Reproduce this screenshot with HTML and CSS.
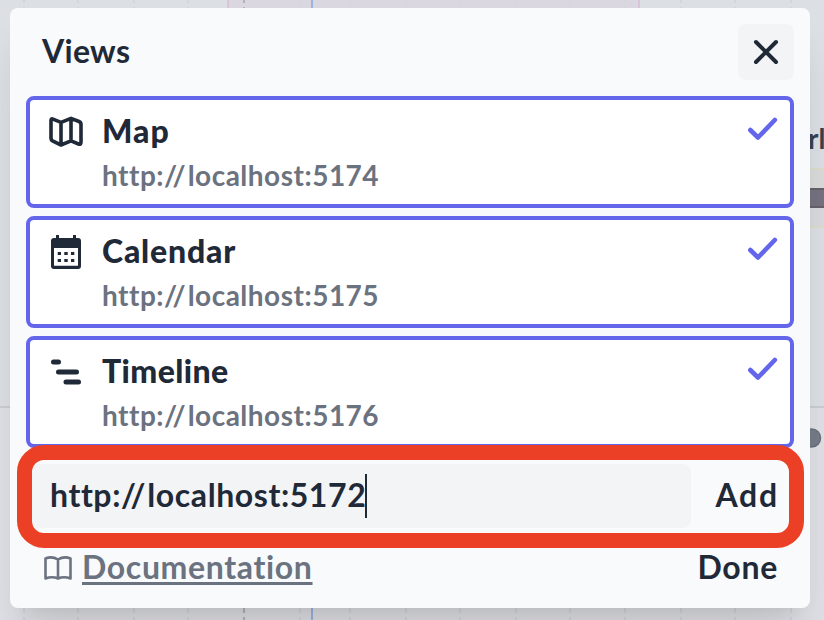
FILE: index.html
```html
<!DOCTYPE html>
<html lang="en">
<head>
<meta charset="utf-8">
<title>Views</title>
<link rel="stylesheet" href="styles.css">
</head>
<body>
<svg class="backdrop" width="824" height="620" viewBox="0 0 824 620" aria-hidden="true">
  <rect width="824" height="407" fill="#dce0e5"/>
  <rect y="407" width="824" height="213" fill="#e0e1e6"/>
  <rect x="228" width="412" height="300" fill="#dad7e1"/>
  <path d="M24 0V620M78 0V620M134 0V620M188 0V620M300 0V620M350 0V620M406 0V620M460 0V620M516 0V620M570 0V620M625 0V620M681 0V620M735 0V620M791 0V620" stroke="#d5d6dc" stroke-width="2" stroke-dasharray="6 4" stroke-dashoffset="3"/>
  <path d="M228 0V300M639 0V300" stroke="#d8c5d7" stroke-width="2"/>
  <path d="M244 0V620" stroke="#b3b3bc" stroke-width="2" stroke-dasharray="6 4" stroke-dashoffset="3"/>
  <path d="M312 0V620" stroke="#9bb5e0" stroke-width="2"/>
  <path d="M0 407H824" stroke="#cbcdd4" stroke-width="2"/>
  <rect x="790" y="169" width="40" height="58" fill="#dadcdb" stroke="#dedccb" stroke-width="2"/>
  <rect x="790" y="208" width="40" height="18" fill="#d9dbdf"/>
  <rect x="790" y="189" width="40" height="18" fill="#75737f" stroke="#686069" stroke-width="2"/>
  <circle cx="811.500" cy="438" r="9" fill="#777d88" stroke="#69707b" stroke-width="1.500"/>
</svg>
<span class="backdrop-label">rl</span>

<main class="dialog">
  <header class="dialog-header">
    <h1 class="title">Views</h1>
    <button class="close" aria-label="Close">
      <svg width="28" height="28" viewBox="0 0 28 28"><path d="M4 4L24 24M24 4L4 24" fill="none" stroke="currentColor" stroke-width="4" stroke-linecap="round"/></svg>
    </button>
  </header>

  <ul class="views">
    <li class="view">
      <svg class="view-icon" width="36" height="36" viewBox="0 0 36 36" fill="none" stroke="currentColor" stroke-width="3.600" stroke-linejoin="round"><path d="M3 6.500Q3 4.300 5 5.100L13 8.300L23 4.300L31 7.500Q33 8.300 33 10.500V28Q33 31 30.500 30L23 26.800L13 31L5 27.200Q3 26.300 3 24ZM13 8.300V31M23 4.300V26.800"/></svg>
      <div class="view-text"><strong class="view-name name-map">Map</strong><span class="view-url">http:<span class="slashes">//</span>localhost:5174</span></div>
      <svg class="check" width="32" height="32" viewBox="0 0 32 32"><path d="M4.300 17L12 24.500L28.800 7" fill="none" stroke="currentColor" stroke-width="4.600" stroke-linecap="round" stroke-linejoin="round"/></svg>
    </li>
    <li class="view">
      <svg class="view-icon" width="36" height="36" viewBox="0 0 36 36" fill="currentColor"><path fill-rule="evenodd" d="M8 1H11V4H25V1H28V4H30Q33 4 33 7V32Q33 35 30 35H6Q3 35 3 32V7Q3 4 6 4H8ZM6 14V31.700H30V14Z"/><path d="M9.700 18h3.300v3h-3.300zM16.300 18h3.400v3h-3.400zM23 18h3.300v3h-3.300zM9.700 25h3.300v3h-3.300zM16.300 25h3.400v3h-3.400zM23 25h3.300v3h-3.300z"/></svg>
      <div class="view-text"><strong class="view-name name-calendar">Calendar</strong><span class="view-url">http:<span class="slashes">//</span>localhost:5175</span></div>
      <svg class="check" width="32" height="32" viewBox="0 0 32 32"><path d="M4.300 17L12 24.500L28.800 7" fill="none" stroke="currentColor" stroke-width="4.600" stroke-linecap="round" stroke-linejoin="round"/></svg>
    </li>
    <li class="view">
      <svg class="view-icon" width="36" height="36" viewBox="0 0 36 36"><path d="M5.500 8H10.500M10.500 18H28.500M18 28H30.500" fill="none" stroke="currentColor" stroke-width="5" stroke-linecap="round"/></svg>
      <div class="view-text"><strong class="view-name name-timeline">Timeline</strong><span class="view-url">http:<span class="slashes">//</span>localhost:5176</span></div>
      <svg class="check" width="32" height="32" viewBox="0 0 32 32"><path d="M4.300 17L12 24.500L28.800 7" fill="none" stroke="currentColor" stroke-width="4.600" stroke-linecap="round" stroke-linejoin="round"/></svg>
    </li>
  </ul>

  <div class="add-row">
    <div class="url-field"><span class="url-value">http:<span class="slashes">//</span>localhost:5172</span><span class="caret"></span></div>
    <button class="text-button add">Add</button>
    <div class="highlight"></div>
  </div>

  <footer class="dialog-footer">
    <svg class="book" width="28" height="28" viewBox="0 0 28 28" fill="none" stroke="currentColor" stroke-width="2.600" stroke-linejoin="round" stroke-linecap="round"><path d="M14 5.500Q8 1.800 1.500 4.500V24.500Q8 22 14 24.500Q20 22 26.500 24.500V4.500Q20 1.800 14 5.500V24.500"/></svg>
    <a class="docs">Documentation</a>
    <button class="text-button done">Done</button>
  </footer>
</main>
</body>
</html>
```
FILE: styles.css
```css
* { box-sizing: border-box; }
body {
  margin: 0;
  width: 824px;
  height: 620px;
  overflow: hidden;
  position: relative;
  padding: 8px 14px 12px 10px;
  background: #dce0e5;
  color: #1f2937;
  font-family: Lato, "Liberation Sans", sans-serif;
  font-size: 32px;
  font-weight: 700;
  font-variant-ligatures: none;
}
button {
  font: inherit;
  color: inherit;
  border: 0;
  padding: 0;
  background: none;
}
.backdrop { position: absolute; left: 0; top: 0; }
.backdrop-label {
  position: absolute;
  left: 808px;
  top: 121px;
  font-size: 28px;
  line-height: 34px;
  color: #374151;
}
.dialog {
  position: relative;
  width: 800px;
  height: 600px;
  padding: 16px;
  border-radius: 8px;
  background: #f9fafc;
  box-shadow: 0 40px 50px -10px rgba(0, 0, 0, .1), 0 16px 20px -12px rgba(0, 0, 0, .1);
}
.dialog-header {
  display: flex;
  align-items: center;
  justify-content: space-between;
  height: 56px;
  padding-left: 16px;
}
.title { margin: 0; font-size: 32px; font-weight: 700; line-height: 40px; padding-bottom: 2px; letter-spacing: .3px; }
.close {
  display: grid;
  place-items: center;
  width: 56px;
  height: 56px;
  border-radius: 8px;
  background: #f3f4f6;
}
.views {
  display: flex;
  flex-direction: column;
  gap: 8px;
  margin: 16px 0 0;
  padding: 0;
  list-style: none;
}
.view {
  display: flex;
  height: 112px;
  padding: 12px 12px 0 18px;
  border: 4px solid #6366eb;
  border-radius: 8px;
  background: #fff;
}
.view-icon { margin-top: 2px; }
.view-text { display: flex; flex-direction: column; flex: 1; padding-left: 18px; }
.view-name { line-height: 38px; align-self: flex-start; }
.name-map { letter-spacing: 1px; }
.name-calendar { letter-spacing: .8px; }
.name-timeline { letter-spacing: .4px; }
.view-url { font-size: 28px; line-height: 40px; margin-top: 5px; color: #6b7280; align-self: flex-start; letter-spacing: .5px; }
.slashes { letter-spacing: 2px; }
.check { color: #6366eb; margin-top: 1px; }
.add-row {
  display: flex;
  align-items: center;
  position: relative;
  margin-top: 16px;
  height: 64px;
}
.url-field {
  display: flex;
  align-items: center;
  width: 665px;
  height: 64px;
  padding-left: 24px;
  border-radius: 8px;
  background: #f3f4f6;
}
.url-value { letter-spacing: .58px; padding-bottom: 3px; }
.caret { width: 2px; height: 44px; margin-left: -1px; background: #1f2937; }
.text-button { line-height: 40px; padding-bottom: 2px; }
.add { margin-left: auto; margin-right: 15px; letter-spacing: 1.8px; }
.highlight {
  position: absolute;
  left: -9.500px;
  top: -19.500px;
  width: 787.500px;
  height: 103px;
  border: 15px solid #eb4026;
  border-radius: 27px;
}
.dialog-footer {
  display: flex;
  align-items: center;
  margin-top: 20px;
  height: 40px;
  padding: 0 16px 0 18px;
}
.book { color: #6b7280; }
.docs {
  margin-left: 10px;
  padding-bottom: 3px;
  color: #6b7280;
  letter-spacing: .65px;
  text-decoration: underline;
  text-decoration-thickness: 3px;
  text-underline-offset: 3px;
  text-decoration-skip-ink: none;
}
.done { margin-left: auto; letter-spacing: .7px; }
```
